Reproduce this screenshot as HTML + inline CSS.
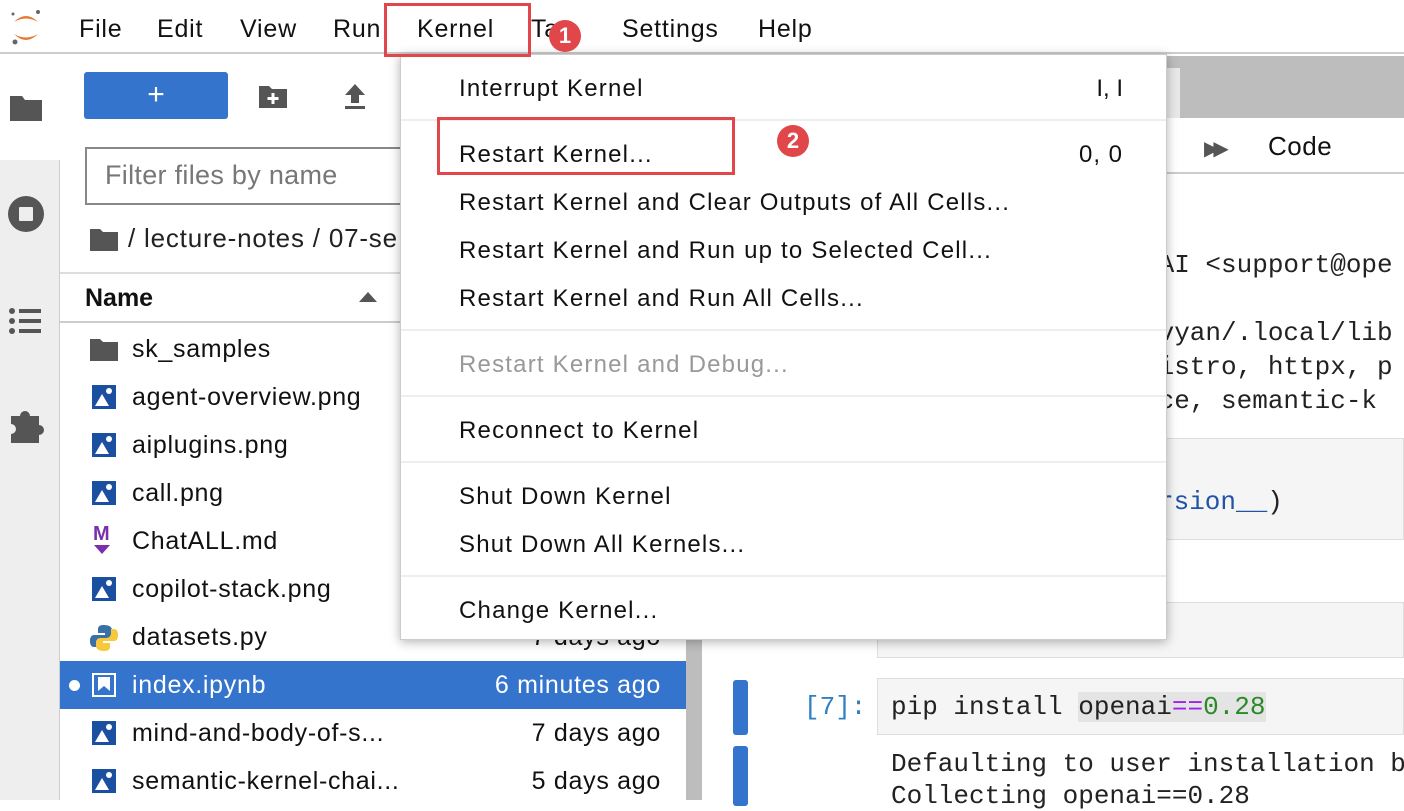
<!DOCTYPE html>
<html><head><meta charset="utf-8"><style>
*{margin:0;padding:0;box-sizing:border-box}
body{width:1404px;height:800px;overflow:hidden;background:#fff;font-family:"Liberation Sans",sans-serif;color:#111;position:relative}
.a{position:absolute;white-space:nowrap}
.mb{font-size:25px;top:15px;letter-spacing:0.8px}
.mono{font-family:"Liberation Mono",monospace;font-size:26px;color:#222}
.row{position:absolute;left:60px;width:626px;height:48px;font-size:25px;letter-spacing:0.7px}
.row .t{position:absolute;left:72px;top:10px}
.row .d{position:absolute;right:25px;top:10px}
.ic{position:absolute;left:32px;top:12px;width:24px;height:24px;background:#1b4fa0;overflow:hidden}
.ic::before{content:"";position:absolute;left:3px;bottom:3px;border-left:7px solid transparent;border-right:7px solid transparent;border-bottom:12px solid #fff}
.ic::after{content:"";position:absolute;right:4px;top:3px;width:6px;height:6px;border-radius:50%;background:#fff}
.mi{position:absolute;left:58px;font-size:24px;letter-spacing:1.2px}
.sep{position:absolute;left:0;right:0;height:2px;background:#eee}
.badge{position:absolute;width:32px;height:32px;border-radius:50%;background:#e0464a;color:#fff;font-weight:bold;font-size:22px;text-align:center;line-height:32px}
</style></head><body>
<div class="a" style="left:0;top:0;width:1404px;height:54px;border-bottom:2px solid #ccc"></div>
<svg class="a" style="left:8px;top:6px" width="36" height="42" viewBox="0 0 36 42"><path d="M6 16 Q18 4 30 16 Q18 9 6 16Z" fill="#e8782d"/><path d="M6 28 Q18 40 30 28 Q18 35 6 28Z" fill="#e8782d"/><circle cx="30" cy="6" r="2" fill="#666"/><circle cx="7" cy="36" r="2.5" fill="#666"/><circle cx="5" cy="8" r="1.5" fill="#666"/></svg>
<div class="a mb" style="left:79px">File</div>
<div class="a mb" style="left:157px">Edit</div>
<div class="a mb" style="left:240px">View</div>
<div class="a mb" style="left:333px">Run</div>
<div class="a mb" style="left:417px">Kernel</div>
<div class="a mb" style="left:531px">Ta</div>
<div class="a mb" style="left:622px">Settings</div>
<div class="a mb" style="left:758px">Help</div>
<div class="a" style="left:0;top:56px;width:60px;height:744px;background:#eee;border-right:1px solid #ccc"></div>
<div class="a" style="left:0;top:56px;width:60px;height:104px;background:#fff"></div>
<svg class="a" style="left:9px;top:92px" width="34" height="30"><path d="M1 4h12l3 4h17v21H1z" fill="#555"/></svg>
<svg class="a" style="left:8px;top:196px" width="36" height="36"><circle cx="18" cy="18" r="18" fill="#555"/><rect x="11" y="11" width="14" height="14" rx="1" fill="#eee"/></svg>
<svg class="a" style="left:9px;top:308px" width="34" height="26"><g fill="#555"><circle cx="3" cy="3" r="3"/><circle cx="3" cy="13" r="3"/><circle cx="3" cy="23" r="3"/><rect x="10" y="1" width="22" height="4"/><rect x="10" y="11" width="22" height="4"/><rect x="10" y="21" width="22" height="4"/></g></svg>
<svg class="a" style="left:9px;top:408px" width="36" height="36"><path d="M2 8h9a5 5 0 1 1 10 0h9v9a5 5 0 1 1 0 10v8H2v-9a5 5 0 1 0 0-10z" fill="#555"/></svg>
<div class="a" style="left:84px;top:72px;width:144px;height:47px;background:#3574cc;border-radius:3px;color:#fff;font-size:30px;text-align:center;line-height:45px">+</div>
<svg class="a" style="left:259px;top:84px" width="28" height="24"><path d="M0 2h10l3 3h15v19H0z" fill="#555"/><path d="M14 9v11M8.5 14.5h11" stroke="#fff" stroke-width="3"/></svg>
<svg class="a" style="left:344px;top:84px" width="22" height="26"><path d="M11 0l10 11h-6v8H7v-8H1z" fill="#555"/><rect x="1" y="22" width="20" height="3" fill="#555"/></svg>
<div class="a" style="left:85px;top:147px;width:340px;height:58px;border:2px solid #888;border-right:none;font-size:27px;letter-spacing:0.3px;color:#777;padding:11px 0 0 18px">Filter files by name</div>
<svg class="a" style="left:90px;top:227px" width="28" height="24"><path d="M0 2h10l3 3h15v19H0z" fill="#555"/></svg>
<div class="a" style="left:128px;top:223px;font-size:26px;letter-spacing:0.8px;color:#222">/ lecture-notes / 07-se</div>
<div class="a" style="left:60px;top:272px;width:626px;height:2px;background:#ddd"></div>
<div class="a" style="left:85px;top:284px;font-size:25px;font-weight:bold">Name</div>
<div class="a" style="left:359px;top:292px;width:0;height:0;border-left:9px solid transparent;border-right:9px solid transparent;border-bottom:10px solid #555"></div>
<div class="a" style="left:60px;top:321px;width:626px;height:2px;background:#ccc"></div>
<div class="a" style="left:686px;top:323px;width:16px;height:477px;background:#bdbdbd"></div>
<div class="row" style="top:325px"><svg class="a" style="left:30px;top:12px" width="28" height="24"><path d="M0 2h10l3 3h15v19H0z" fill="#555"/></svg><span class="t">sk_samples</span></div>
<div class="row" style="top:373px"><div class="ic"></div><span class="t">agent-overview.png</span></div>
<div class="row" style="top:421px"><div class="ic"></div><span class="t">aiplugins.png</span></div>
<div class="row" style="top:469px"><div class="ic"></div><span class="t">call.png</span></div>
<div class="row" style="top:517px"><span class="a" style="left:33px;top:6px;color:#7b2fa8;font-weight:bold;font-size:20px">M</span><span class="a" style="left:34px;top:28px;border-left:8px solid transparent;border-right:8px solid transparent;border-top:9px solid #7b2fa8"></span><span class="t">ChatALL.md</span></div>
<div class="row" style="top:565px"><div class="ic"></div><span class="t">copilot-stack.png</span></div>
<div class="row" style="top:613px"><svg class="a" style="left:30px;top:11px" width="28" height="28"><path d="M14 1c-6 0-6 3-6 5v3h7v2H4c-3 0-4 3-4 6s1 6 4 6h3v-4c0-3 2-5 5-5h6c2 0 4-2 4-4V6c0-3-3-5-8-5z" fill="#3a6fa8"/><path d="M14 27c6 0 6-3 6-5v-3h-7v-2h11c3 0 4-3 4-6s-1-6-4-6h-3v4c0 3-2 5-5 5h-6c-2 0-4 2-4 4v4c0 3 3 5 8 5z" fill="#f5c93b"/></svg><span class="t">datasets.py</span><span class="d">7 days ago</span></div>
<div class="row" style="top:661px;background:#3574cc;color:#fff"><span class="a" style="left:9px;top:19px;width:11px;height:11px;border-radius:50%;background:#fff"></span><span class="a" style="left:32px;top:12px;width:24px;height:24px;border:2px solid #fff"></span><svg class="a" style="left:38px;top:16px" width="12" height="14"><path d="M0 0h12v14l-6-5-6 5z" fill="#fff"/></svg><span class="t">index.ipynb</span><span class="d">6 minutes ago</span></div>
<div class="row" style="top:709px"><div class="ic"></div><span class="t">mind-and-body-of-s...</span><span class="d">7 days ago</span></div>
<div class="row" style="top:757px"><div class="ic"></div><span class="t">semantic-kernel-chai...</span><span class="d">5 days ago</span></div>
<div class="a" style="left:702px;top:56px;width:702px;height:62px;background:#bdbdbd"></div>
<div class="a" style="left:1160px;top:68px;width:20px;height:50px;background:#e8e8e8"></div>
<div class="a" style="left:702px;top:118px;width:702px;height:56px;background:#fff;border-bottom:2px solid #ccc"></div>
<div class="a" style="left:1204px;top:136px;font-size:20px;color:#555;letter-spacing:-6px">▶▶</div>
<div class="a" style="left:1268px;top:131px;font-size:26px;letter-spacing:0.5px">Code</div>
<div class="a mono" style="left:1143px;top:250px">nAI &lt;support@ope</div>
<div class="a mono" style="left:1143px;top:318px">ovyan/.local/lib</div>
<div class="a mono" style="left:1143px;top:352px">listro, httpx, p</div>
<div class="a mono" style="left:1143px;top:386px">nce, semantic-k</div>
<div class="a" style="left:877px;top:438px;width:527px;height:102px;background:#f5f5f5;border:1px solid #ddd"></div>
<div class="a mono" style="left:1158px;top:487px;color:#2154a8">rsion__<span style="color:#222">)</span></div>
<div class="a" style="left:877px;top:602px;width:527px;height:56px;background:#f5f5f5;border:1px solid #ddd"></div>
<div class="a" style="left:733px;top:680px;width:15px;height:55px;background:#3574cc;border-radius:3px"></div>
<div class="a" style="left:733px;top:746px;width:15px;height:60px;background:#3574cc;border-radius:3px"></div>
<div class="a mono" style="left:804px;top:692px;color:#307fc1">[7]:</div>
<div class="a" style="left:877px;top:678px;width:527px;height:57px;background:#f5f5f5;border:1px solid #ddd"></div>
<div class="a mono" style="left:891px;top:692px">pip install <span style="background:#e4e4e4">openai<span style="color:#a020f0">==</span><span style="color:#2a8a2a">0.28</span></span></div>
<div class="a mono" style="left:891px;top:749px">Defaulting to user installation b</div>
<div class="a mono" style="left:891px;top:781px">Collecting openai==0.28</div>
<div class="a" style="left:400px;top:54px;width:767px;height:586px;background:#fff;border:1px solid #ccc;box-shadow:0 2px 10px rgba(0,0,0,.3)">
<div class="mi" style="top:20px">Interrupt Kernel</div><div class="a" style="right:43px;top:20px;font-size:24px">I, I</div>
<div class="sep" style="top:64px"></div>
<div class="mi" style="top:86px">Restart Kernel...</div><div class="a" style="right:43px;top:86px;font-size:24px;letter-spacing:1px">0, 0</div>
<div class="mi" style="top:134px">Restart Kernel and Clear Outputs of All Cells...</div>
<div class="mi" style="top:182px">Restart Kernel and Run up to Selected Cell...</div>
<div class="mi" style="top:230px">Restart Kernel and Run All Cells...</div>
<div class="sep" style="top:274px"></div>
<div class="mi" style="top:296px;color:#999">Restart Kernel and Debug...</div>
<div class="sep" style="top:340px"></div>
<div class="mi" style="top:362px">Reconnect to Kernel</div>
<div class="sep" style="top:406px"></div>
<div class="mi" style="top:428px">Shut Down Kernel</div>
<div class="mi" style="top:476px">Shut Down All Kernels...</div>
<div class="sep" style="top:520px"></div>
<div class="mi" style="top:542px">Change Kernel...</div>
</div>
<div class="a" style="left:384px;top:3px;width:147px;height:54px;border:3px solid #e0464a"></div>
<div class="badge" style="left:549px;top:20px">1</div>
<div class="a" style="left:437px;top:117px;width:298px;height:58px;border:3px solid #e0464a"></div>
<div class="badge" style="left:777px;top:125px">2</div>
</body></html>
